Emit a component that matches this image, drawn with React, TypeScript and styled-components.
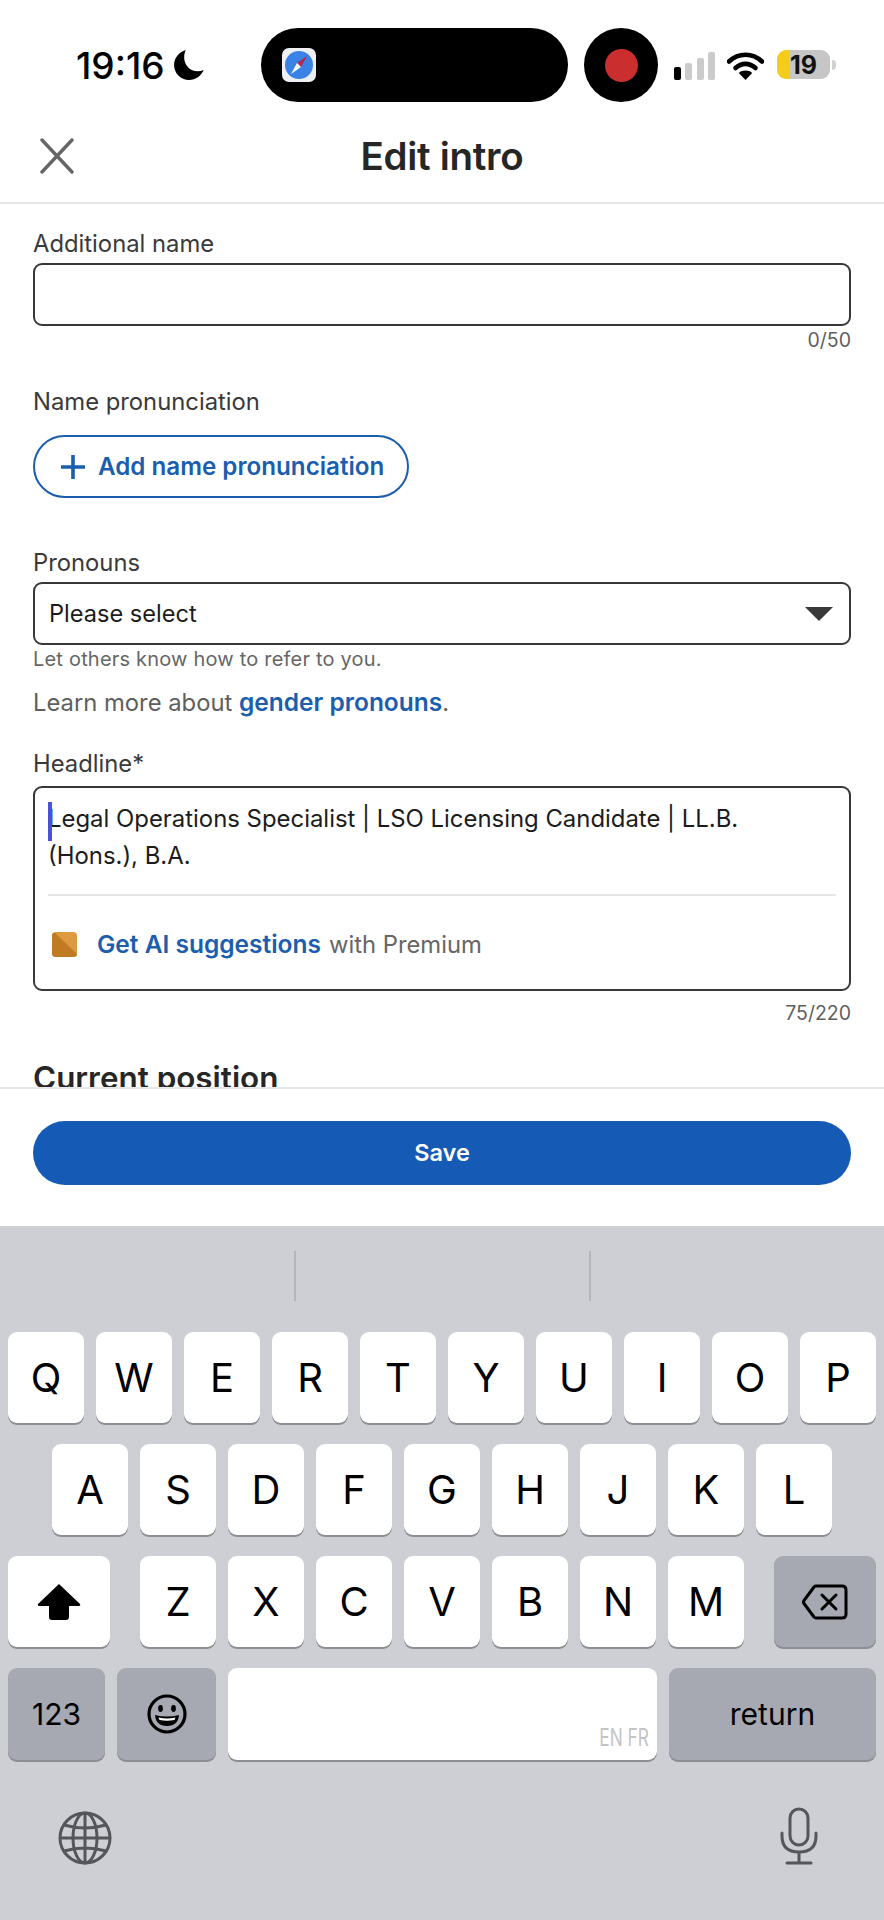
import React from "react";
import styled, { createGlobalStyle } from "styled-components";

const GlobalStyle = createGlobalStyle`
  html, body {
    margin: 0;
    padding: 0;
    background: #ffffff;
  }
  * {
    box-sizing: border-box;
  }
`;

const rows = ["QWERTYUIOP", "ASDFGHJKL", "ZXCVBNM"];

export default function App() {
  return (
    <>
      <GlobalStyle />
      <Page>
        <StatusBar>
          <TimeGroup>
            <Time>19:16</Time>
            <svg width="32" height="32" viewBox="0 0 30 30">
              <path d="M12 1C5.500 3 1 8.500 1 15c0 7.800 6.200 14 14 14 6.200 0 11.500-3.800 13.800-9.300-1.800.8-3.800 1.200-5.800 1.200-7 0-12.500-5.600-12.500-12.600 0-2.700.3-5 1.500-7.300z" fill="#000" />
            </svg>
          </TimeGroup>
          <Island>
            <svg width="34" height="34" viewBox="0 0 34 34">
              <rect width="34" height="34" rx="7" fill="#eef0f3" />
              <circle cx="17" cy="17" r="14" fill="#3b82e6" />
              <path d="M25 8 L19 19 L15 15 Z" fill="#b8264a" />
              <path d="M9 26 L15 15 L19 19 Z" fill="#ffffff" />
            </svg>
          </Island>
          <RecordBubble>
            <RecordDot />
          </RecordBubble>
          <svg width="42" height="28" viewBox="0 0 42 28">
            <rect x="0" y="15" width="7" height="13" rx="2" fill="#000" />
            <rect x="11" y="11" width="7" height="17" rx="2" fill="#cbcbcb" />
            <rect x="23" y="6" width="7" height="22" rx="2" fill="#cbcbcb" />
            <rect x="34" y="0" width="7" height="28" rx="2" fill="#cbcbcb" />
          </svg>
          <WifiIcon width="37" height="28" viewBox="0 0 37 28">
            <path d="M2 9.5C11.5 0.5 25.5 0.5 35 9.5" fill="none" stroke="#000" strokeWidth="4.6" strokeLinecap="round" />
            <path d="M8.5 16C14.5 10.5 22.5 10.5 28.5 16" fill="none" stroke="#000" strokeWidth="4.6" strokeLinecap="round" />
            <path d="M18.5 28L11.8 21C15.5 17.8 21.5 17.8 25.2 21z" fill="#000" />
          </WifiIcon>
          <Battery>
            <BatteryBody>
              <BatteryText>19</BatteryText>
            </BatteryBody>
            <BatteryNub />
          </Battery>
        </StatusBar>

        <Header>
          <CloseButton>
            <svg width="36" height="36" viewBox="0 0 36 36">
              <path d="M3 2 L33 34 M33 2 L3 34" stroke="#666666" strokeWidth="3.4" strokeLinecap="round" />
            </svg>
          </CloseButton>
          <Title>Edit intro</Title>
        </Header>

        <Form>
          <Label $top={26}>Additional name</Label>
          <Field />
          <Counter>0/50</Counter>

          <Label $top={37}>Name pronunciation</Label>
          <PronounceButton>
            <svg width="26" height="26" viewBox="0 0 26 26">
              <path d="M13 1 V25 M1 13 H25" stroke="#1b5eae" strokeWidth="3.6" />
            </svg>
            Add name pronunciation
          </PronounceButton>

          <Label $top={51}>Pronouns</Label>
          <SelectField>
            Please select
            <Caret />
          </SelectField>
          <Help>Let others know how to refer to you.</Help>
          <LearnMore>
            Learn more about <StrongLink>gender pronouns</StrongLink>.
          </LearnMore>

          <Label $top={33} $bottom={8}>Headline*</Label>
          <HeadlineBox>
            <TextCaret />
            <HeadlineText>
              Legal Operations Specialist | LSO Licensing Candidate | LL.B.
              <br />
              (Hons.), B.A.
            </HeadlineText>
            <BoxDivider />
            <SuggestRow>
              <svg width="25" height="25" viewBox="0 0 25 25">
                <rect width="25" height="25" rx="4" fill="#dd9a3e" />
                <path d="M0 4 Q0 0 3 1 L25 22 Q25 25 21 25 H4 Q0 25 0 21 Z" fill="#bf7a22" />
              </svg>
              <SuggestText>
                <StrongLink>Get AI suggestions</StrongLink>
                <SuggestNote>with Premium</SuggestNote>
              </SuggestText>
            </SuggestRow>
          </HeadlineBox>
          <Counter $top={11}>75/220</Counter>
          <SectionTitle>Current position</SectionTitle>
        </Form>

        <Footer>
          <SaveButton>Save</SaveButton>
        </Footer>

        <Keyboard>
          <SuggestionBar>
            <Separator />
            <Separator />
          </SuggestionBar>
          <KeyRows>
            <KeyRow>
              {rows[0].split("").map((k) => (
                <Key key={k}>{k}</Key>
              ))}
            </KeyRow>
            <KeyRow>
              {rows[1].split("").map((k) => (
                <Key key={k}>{k}</Key>
              ))}
            </KeyRow>
            <KeyRow $between>
              <Key $width={102}>
                <svg width="44" height="38" viewBox="0 0 44 38">
                  <path d="M22 1 L43 21 Q44 23 41 23 H32 V34 Q32 37 29 37 H15 Q12 37 12 34 V23 H3 Q0 23 1 21 Z" fill="#000" />
                </svg>
              </Key>
              <KeyGroup>
                {rows[2].split("").map((k) => (
                  <Key key={k}>{k}</Key>
                ))}
              </KeyGroup>
              <Key $width={102} $dark>
                <svg width="46" height="36" viewBox="0 0 46 36">
                  <path d="M14 2 H40 Q44 2 44 6 V30 Q44 34 40 34 H14 Q13 34 12 33 L2 19.5 Q1 18 2 16.5 L12 3 Q13 2 14 2 Z" fill="none" stroke="#000" strokeWidth="3" strokeLinejoin="round" />
                  <path d="M20 11 L34 25 M34 11 L20 25" stroke="#000" strokeWidth="3" strokeLinecap="round" />
                </svg>
              </Key>
            </KeyRow>
            <KeyRow $tall>
              <Key $width={97} $dark $small>123</Key>
              <Key $width={99} $dark>
                <svg width="40" height="40" viewBox="0 0 40 40">
                  <circle cx="20" cy="20" r="18" fill="none" stroke="#000" strokeWidth="3.2" />
                  <ellipse cx="13.5" cy="14.5" rx="2.4" ry="3.4" fill="#000" />
                  <ellipse cx="26.5" cy="14.5" rx="2.4" ry="3.4" fill="#000" />
                  <path d="M8 21 Q20 24 32 21 Q31 32 20 32 Q9 32 8 21 Z" fill="#000" />
                  <path d="M11.5 23.5 Q20 25.5 28.5 23.5 L27.5 26 Q20 27.5 12.5 26 Z" fill="#fff" />
                </svg>
              </Key>
              <SpaceKey>
                <LangHint>EN FR</LangHint>
              </SpaceKey>
              <Key $width={207} $dark $small>return</Key>
            </KeyRow>
          </KeyRows>
          <BottomBar>
            <svg width="54" height="54" viewBox="0 0 54 54">
              <g fill="none" stroke="#55565a" strokeWidth="3">
                <circle cx="27" cy="27" r="25" />
                <ellipse cx="27" cy="27" rx="12" ry="25" />
                <path d="M27 2 V52 M2 27 H52 M6 14 Q27 20 48 14 M6 40 Q27 34 48 40" />
              </g>
            </svg>
            <svg width="38" height="58" viewBox="0 0 38 58">
              <g fill="none" stroke="#55565a" strokeWidth="3">
                <rect x="10" y="2" width="18" height="36" rx="9" />
                <path d="M2 26 V29 Q2 45 19 45 Q36 45 36 29 V26 M19 45 V56 M7 56 H31" strokeLinecap="round" />
              </g>
            </svg>
          </BottomBar>
        </Keyboard>
      </Page>
    </>
  );
}

const Page = styled.div`
  width: 884px;
  height: 1920px;
  display: flex;
  flex-direction: column;
  overflow: hidden;
  background: #ffffff;
  font-family: Inter, "Liberation Sans", sans-serif;
  color: #2a2a2a;
`;

const StatusBar = styled.div`
  height: 118px;
  padding-top: 28px;
  display: flex;
  align-items: flex-start;
  & > svg {
    margin: 24px 0 0 16px;
  }
`;

const TimeGroup = styled.div`
  width: 261px;
  height: 74px;
  padding-left: 76px;
  display: flex;
  align-items: center;
  gap: 8px;
`;

const Time = styled.span`
  font-size: 37px;
  font-weight: 500;
  color: #000000;
`;

const Island = styled.div`
  width: 307px;
  height: 74px;
  padding-left: 21px;
  border-radius: 37px;
  background: #000000;
  display: flex;
  align-items: center;
`;

const RecordBubble = styled.div`
  width: 74px;
  height: 74px;
  margin-left: 16px;
  border-radius: 50%;
  background: #000000;
  display: flex;
  align-items: center;
  justify-content: center;
`;

const RecordDot = styled.div`
  width: 33px;
  height: 33px;
  border-radius: 50%;
  background: #cb2e2e;
`;

const WifiIcon = styled.svg`
  margin-left: 11px !important;
`;

const Battery = styled.div`
  margin: 22px 0 0 13px;
  display: flex;
  align-items: center;
  gap: 2px;
`;

const BatteryBody = styled.div`
  width: 53px;
  height: 29px;
  border-radius: 9px;
  background: linear-gradient(to right, #f6cc1b 12px, #c6c6c6 12px);
  display: flex;
  align-items: center;
  justify-content: center;
`;

const BatteryText = styled.span`
  font-size: 25px;
  font-weight: 700;
  color: #111111;
`;

const BatteryNub = styled.div`
  width: 4px;
  height: 10px;
  border-radius: 0 4px 4px 0;
  background: #d0d0d0;
`;

const Header = styled.div`
  position: relative;
  height: 86px;
  padding-bottom: 8px;
  border-bottom: 2px solid #e6e6e6;
  display: flex;
  align-items: center;
  justify-content: center;
`;

const CloseButton = styled.div`
  position: absolute;
  left: 39px;
  top: 20px;
  line-height: 0;
`;

const Title = styled.div`
  font-size: 38.5px;
  font-weight: 600;
  color: #262626;
  letter-spacing: -0.3px;
`;

const Form = styled.div`
  height: 883px;
  padding: 0 33px;
  overflow: hidden;
`;

const Label = styled.div<{ $top: number; $bottom?: number }>`
  margin-top: ${(p) => p.$top}px;
  margin-bottom: ${(p) => p.$bottom ?? 5}px;
  font-size: 23.8px;
  line-height: 28px;
  color: #3a3a3a;
`;

const Field = styled.div`
  height: 63px;
  border: 2px solid #383838;
  border-radius: 9px;
`;

const Counter = styled.div<{ $top?: number }>`
  margin-top: ${(p) => p.$top ?? 3}px;
  font-size: 19.5px;
  line-height: 22px;
  text-align: right;
  color: #5f5f5f;
`;

const PronounceButton = styled.div`
  width: 376px;
  height: 63px;
  margin-top: 19px;
  padding-left: 25px;
  border: 2px solid #1b5eae;
  border-radius: 32px;
  display: flex;
  align-items: center;
  gap: 12px;
  font-size: 24.2px;
  font-weight: 600;
  color: #1b5eae;
`;

const SelectField = styled(Field)`
  padding: 0 16px 0 14px;
  display: flex;
  align-items: center;
  justify-content: space-between;
  font-size: 23.6px;
  color: #1c1c1c;
`;

const Caret = styled.div`
  width: 0;
  height: 0;
  border-left: 14px solid transparent;
  border-right: 14px solid transparent;
  border-top: 14px solid #3a3a3a;
`;

const Help = styled.div`
  margin-top: 3px;
  font-size: 20px;
  line-height: 22px;
  letter-spacing: 0.2px;
  color: #666666;
`;

const LearnMore = styled.div`
  margin-top: 18px;
  font-size: 23.8px;
  line-height: 28px;
  color: #5f5f5f;
`;

const StrongLink = styled.span`
  font-size: 24.5px;
  font-weight: 600;
  color: #1b5eae;
`;

const HeadlineBox = styled.div`
  position: relative;
  height: 205px;
  padding: 12px 13px 0;
  border: 2px solid #383838;
  border-radius: 9px;
`;

const TextCaret = styled.div`
  position: absolute;
  left: 13px;
  top: 14px;
  width: 4px;
  height: 39px;
  background: #4a50d8;
`;

const HeadlineText = styled.div`
  font-size: 23.9px;
  line-height: 37px;
  color: #1c1c1c;
`;

const BoxDivider = styled.div`
  height: 2px;
  margin: 20px 0 0;
  background: #e6e6e6;
`;

const SuggestRow = styled.div`
  margin-top: 33px;
  padding-left: 4px;
  display: flex;
  align-items: center;
  gap: 20px;
`;

const SuggestText = styled.div`
  display: flex;
  align-items: baseline;
  gap: 8px;
  font-size: 23.8px;
`;

const SuggestNote = styled.span`
  color: #666666;
`;

const SectionTitle = styled.div`
  margin-top: 35px;
  font-size: 31.4px;
  line-height: 38px;
  font-weight: 600;
  color: #262626;
`;

const Footer = styled.div`
  height: 139px;
  padding: 32px 33px 0;
  border-top: 2px solid #e8e8e8;
`;

const SaveButton = styled.div`
  height: 64px;
  padding-bottom: 2px;
  border-radius: 32px;
  background: #155ab4;
  display: flex;
  align-items: center;
  justify-content: center;
  font-size: 23.5px;
  font-weight: 600;
  color: #ffffff;
`;

const Keyboard = styled.div`
  flex: 1;
  background: #cdcfd5;
`;

const SuggestionBar = styled.div`
  height: 106px;
  padding-top: 25px;
  display: flex;
  justify-content: center;
  gap: 293px;
`;

const Separator = styled.div`
  width: 2px;
  height: 50px;
  background: #b4b6bc;
`;

const KeyRows = styled.div`
  display: flex;
  flex-direction: column;
  gap: 21px;
  padding: 0 8px;
`;

const KeyRow = styled.div<{ $between?: boolean; $tall?: boolean }>`
  height: ${(p) => (p.$tall ? 92 : 91)}px;
  display: flex;
  justify-content: ${(p) => (p.$between ? "space-between" : "center")};
  gap: 12px;
`;

const KeyGroup = styled.div`
  display: flex;
  gap: 12px;
`;

const Key = styled.div<{ $width?: number; $dark?: boolean; $small?: boolean }>`
  width: ${(p) => p.$width ?? 76}px;
  border-radius: 9px;
  background: ${(p) => (p.$dark ? "#a6a8b2" : "#ffffff")};
  box-shadow: 0 2px 0 #8b8d93;
  display: flex;
  align-items: center;
  justify-content: center;
  font-size: ${(p) => (p.$small ? 30 : 40)}px;
  font-weight: 400;
  color: #000000;
`;

const SpaceKey = styled(Key)`
  position: relative;
  width: 429px;
`;

const LangHint = styled.span`
  position: absolute;
  right: 8px;
  bottom: 10px;
  font-size: 24px;
  line-height: 24px;
  color: #c4c4c4;
  transform: scaleX(0.72);
  transform-origin: right center;
  white-space: nowrap;
`;

const BottomBar = styled.div`
  margin-top: 47px;
  padding: 0 66px 0 58px;
  display: flex;
  justify-content: space-between;
  align-items: flex-end;
`;
